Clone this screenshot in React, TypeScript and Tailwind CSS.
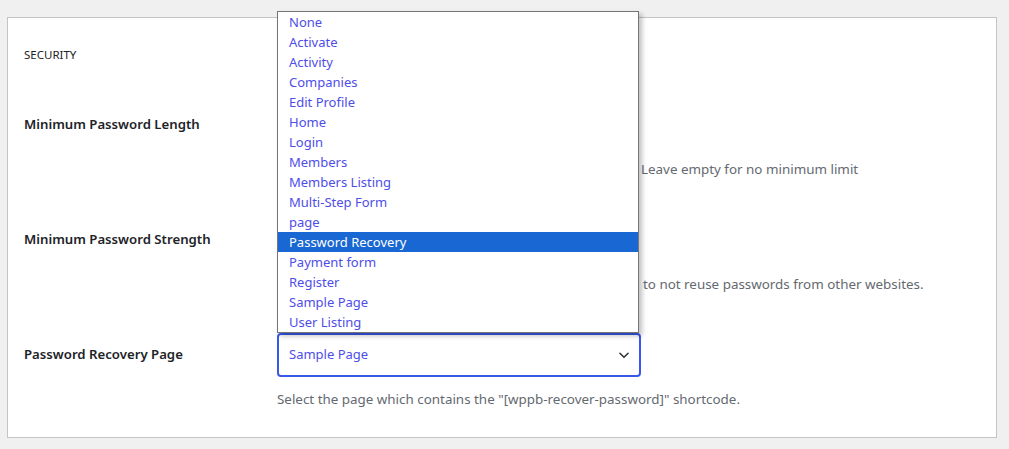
import { useState } from "react";

const pages = [
  "None",
  "Activate",
  "Activity",
  "Companies",
  "Edit Profile",
  "Home",
  "Login",
  "Members",
  "Members Listing",
  "Multi-Step Form",
  "page",
  "Password Recovery",
  "Payment form",
  "Register",
  "Sample Page",
  "User Listing",
];

function Chevron() {
  return (
    <svg width="14" height="14" viewBox="0 0 24 24" fill="none" stroke="#2c3338" strokeWidth="2.6" strokeLinecap="round" strokeLinejoin="round">
      <path d="M5 9l7 7 7-7" />
    </svg>
  );
}

export default function App() {
  const [hovered] = useState("Password Recovery");
  const [selected] = useState("Sample Page");

  return (
    <div className="min-h-[449px] bg-[#f0f0f1] pt-[17px] pb-[12px] pl-[7px] pr-[12px] font-['Noto_Sans','Open_Sans',sans-serif] text-[13px] text-[#1d2327]">
      <div className="border border-[#c3c4c7] bg-white pl-[16px] pr-[16px] pt-[29px] pb-[29px]">
        {/* SECTION TITLE */}
        <h2 className="text-[11.5px] leading-[16px] uppercase">Security</h2>

        <div className="mt-[40px] flex flex-col gap-[40px]">
          {/* ROW: MIN LENGTH */}
          <div className="grid grid-cols-[253px_1fr]">
            <div className="h-[44px] flex items-center font-semibold text-[13.2px]">Minimum Password Length</div>
            <div>
              <div className="h-[44px] w-[363px]" />
              <p className="mt-[13px] leading-[18px] text-[13.4px] text-[#646970] pl-[364px]">Leave empty for no minimum limit</p>
            </div>
          </div>

          {/* ROW: MIN STRENGTH */}
          <div className="grid grid-cols-[253px_1fr]">
            <div className="h-[44px] flex items-center font-semibold text-[13.2px]">Minimum Password Strength</div>
            <div>
              <div className="h-[44px] w-[363px]" />
              <p className="mt-[13px] leading-[18px] text-[13.4px] text-[#646970] pl-[366px]">to not reuse passwords from other websites.</p>
            </div>
          </div>

          {/* ROW: RECOVERY PAGE */}
          <div className="grid grid-cols-[253px_1fr]">
            <div className="h-[44px] flex items-center font-semibold text-[13.2px]">Password Recovery Page</div>
            <div>
              <div className="relative w-[364px]">
                {/* open dropdown list */}
                <ul className="absolute left-0 bottom-full w-[362px] border border-[#767676] bg-white shadow-[3px_3px_5px_rgba(0,0,0,0.25)] z-10">
                  {pages.map((p) => (
                    <li
                      key={p}
                      className={`h-[20px] leading-[20px] pl-[11px] ${
                        p === hovered ? "bg-[#1967d2] text-white" : "text-[#4e4ee8]"
                      }`}
                    >
                      {p}
                    </li>
                  ))}
                </ul>
                <div className="h-[44px] border-2 border-[#3858e9] rounded-[4px] flex items-center justify-between pl-[10px] pr-[8px] text-[#4e4ee8]">
                  <span>{selected}</span>
                  <Chevron />
                </div>
              </div>
              <p className="mt-[13px] leading-[18px] text-[13.4px] text-[#646970]">
                Select the page which contains the "[wppb-recover-password]" shortcode.
              </p>
            </div>
          </div>
        </div>
      </div>
    </div>
  );
}
